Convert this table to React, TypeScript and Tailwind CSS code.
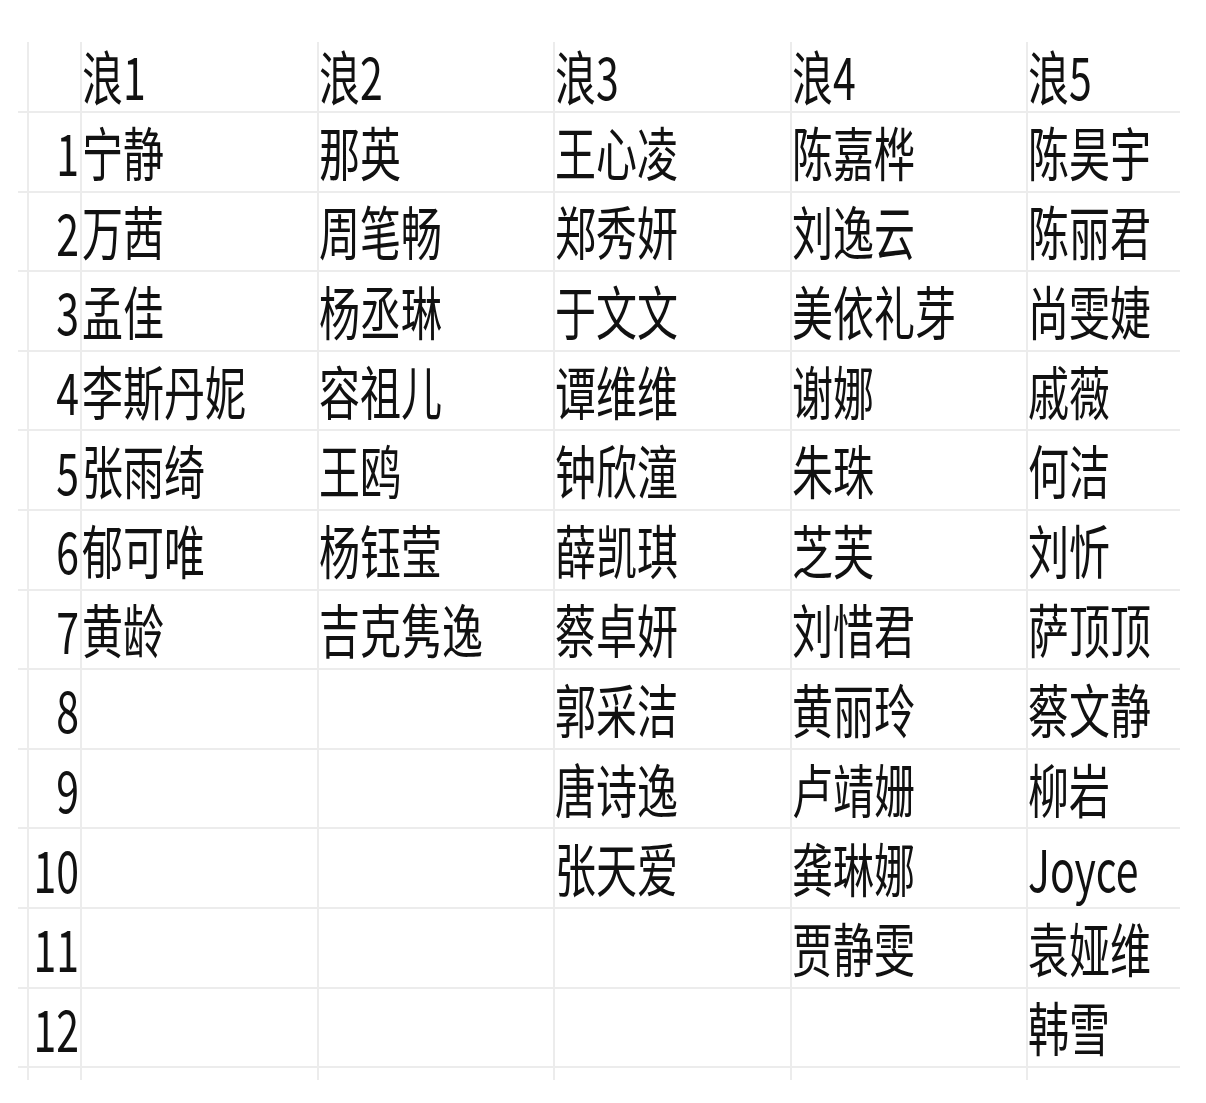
const waves: string[][] = [
  ["宁静", "万茜", "孟佳", "李斯丹妮", "张雨绮", "郁可唯", "黄龄"],
  ["那英", "周笔畅", "杨丞琳", "容祖儿", "王鸥", "杨钰莹", "吉克隽逸"],
  ["王心凌", "郑秀妍", "于文文", "谭维维", "钟欣潼", "薛凯琪", "蔡卓妍", "郭采洁", "唐诗逸", "张天爱"],
  ["陈嘉桦", "刘逸云", "美依礼芽", "谢娜", "朱珠", "芝芙", "刘惜君", "黄丽玲", "卢靖姗", "龚琳娜", "贾静雯"],
  ["陈昊宇", "陈丽君", "尚雯婕", "戚薇", "何洁", "刘忻", "萨顶顶", "蔡文静", "柳岩", "Joyce", "袁娅维", "韩雪"],
];

// sheet columns: small gutter, row numbers, then the five waves
const cols = "grid grid-cols-[9px_53px_237px_236px_237px_236px_154px]";
const line = "border-l-2 border-[#ececec]";
const text =
  "inline-block whitespace-nowrap text-[41px] leading-none text-[#111] scale-y-[1.41] origin-center [font-family:'Noto_Sans_CJK_SC','Noto_Sans',sans-serif]";

function Label({ value }: { value: string }) {
  return <span className={text}>{value}</span>;
}

export default function App() {
  const rows = Array.from({ length: 12 }, (_, i) => i);

  return (
    <div className="min-h-[1103px] w-[1206px] bg-white pt-[42px] pl-[18px]">
      <div className="w-[1162px]">
        <div className={`${cols} h-[71px] border-b-2 border-[#ececec]`}>
          <div />
          <div className={line} />
          {waves.map((_, c) => (
            <div key={c} className={`${line} flex items-center pb-[2px]`}>
              <Label value={`浪${c + 1}`} />
            </div>
          ))}
        </div>

        {rows.map((r) => (
          <div key={r} className={`${cols} h-[79.6px] border-b-2 border-[#ececec]`}>
            <div />
            <div className={`${line} flex items-center justify-end pr-[1px]`}>
              <Label value={`${r + 1}`} />
            </div>
            {waves.map((names, c) => (
              <div key={c} className={`${line} flex items-center pb-[1px]`}>
                {names[r] ? <Label value={names[r]} /> : null}
              </div>
            ))}
          </div>
        ))}

        <div className={`${cols} h-[12px]`}>
          <div />
          <div className={line} />
          {waves.map((_, c) => (
            <div key={c} className={line} />
          ))}
        </div>
      </div>
    </div>
  );
}
